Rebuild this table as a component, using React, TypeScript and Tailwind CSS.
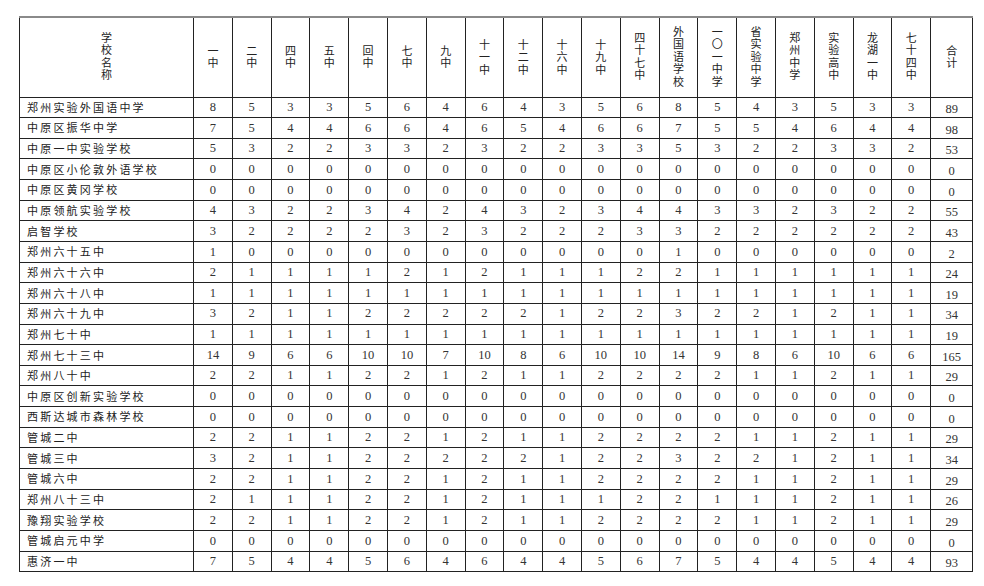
import React from "react";

const headers = [
  "一中", "二中", "四中", "五中", "回中", "七中", "九中", "十一中", "十二中", "十六中", "十九中",
  "四十七中", "外国语学校", "一〇一中学", "省实验中学", "郑州中学", "实验高中", "龙湖一中", "七十四中",
];

const rows: [string, number[], number][] = [
  ["郑州实验外国语中学", [8, 5, 3, 3, 5, 6, 4, 6, 4, 3, 5, 6, 8, 5, 4, 3, 5, 3, 3], 89],
  ["中原区振华中学", [7, 5, 4, 4, 6, 6, 4, 6, 5, 4, 6, 6, 7, 5, 5, 4, 6, 4, 4], 98],
  ["中原一中实验学校", [5, 3, 2, 2, 3, 3, 2, 3, 2, 2, 3, 3, 5, 3, 2, 2, 3, 3, 2], 53],
  ["中原区小伦敦外语学校", Array(19).fill(0), 0],
  ["中原区黄冈学校", Array(19).fill(0), 0],
  ["中原领航实验学校", [4, 3, 2, 2, 3, 4, 2, 4, 3, 2, 3, 4, 4, 3, 3, 2, 3, 2, 2], 55],
  ["启智学校", [3, 2, 2, 2, 2, 3, 2, 3, 2, 2, 2, 3, 3, 2, 2, 2, 2, 2, 2], 43],
  ["郑州六十五中", [1, 0, 0, 0, 0, 0, 0, 0, 0, 0, 0, 0, 1, 0, 0, 0, 0, 0, 0], 2],
  ["郑州六十六中", [2, 1, 1, 1, 1, 2, 1, 2, 1, 1, 1, 2, 2, 1, 1, 1, 1, 1, 1], 24],
  ["郑州六十八中", Array(19).fill(1), 19],
  ["郑州六十九中", [3, 2, 1, 1, 2, 2, 2, 2, 2, 1, 2, 2, 3, 2, 2, 1, 2, 1, 1], 34],
  ["郑州七十中", Array(19).fill(1), 19],
  ["郑州七十三中", [14, 9, 6, 6, 10, 10, 7, 10, 8, 6, 10, 10, 14, 9, 8, 6, 10, 6, 6], 165],
  ["郑州八十中", [2, 2, 1, 1, 2, 2, 1, 2, 1, 1, 2, 2, 2, 2, 1, 1, 2, 1, 1], 29],
  ["中原区创新实验学校", Array(19).fill(0), 0],
  ["西斯达城市森林学校", Array(19).fill(0), 0],
  ["管城二中", [2, 2, 1, 1, 2, 2, 1, 2, 1, 1, 2, 2, 2, 2, 1, 1, 2, 1, 1], 29],
  ["管城三中", [3, 2, 1, 1, 2, 2, 2, 2, 2, 1, 2, 2, 3, 2, 2, 1, 2, 1, 1], 34],
  ["管城六中", [2, 2, 1, 1, 2, 2, 1, 2, 1, 1, 2, 2, 2, 2, 1, 1, 2, 1, 1], 29],
  ["郑州八十三中", [2, 1, 1, 1, 2, 2, 1, 2, 1, 1, 1, 2, 2, 1, 1, 1, 2, 1, 1], 26],
  ["豫翔实验学校", [2, 2, 1, 1, 2, 2, 1, 2, 1, 1, 2, 2, 2, 2, 1, 1, 2, 1, 1], 29],
  ["管城启元中学", Array(19).fill(0), 0],
  ["惠济一中", [7, 5, 4, 4, 5, 6, 4, 6, 4, 4, 5, 6, 7, 5, 4, 4, 5, 4, 4], 93],
];

function VText({ text }: { text: string }) {
  return (
    <div className="flex justify-center">
      <span className="[writing-mode:vertical-rl] [text-orientation:upright] text-[11px] leading-[14px] tracking-[1.5px] text-[#222]">
        {text}
      </span>
    </div>
  );
}

export default function App() {
  return (
    <div className="w-[984px] h-[586px] bg-white pt-[16px] pl-[19px] font-['Noto_Sans_CJK_SC',sans-serif]">
      <table className="table-fixed border-collapse w-[953px] border-t-2 border-t-[#8a8a8a]">
        <colgroup>
          <col className="w-[174px]" />
          {headers.map((h) => (
            <col key={h} className="w-[38.8px]" />
          ))}
          <col className="w-[42px]" />
        </colgroup>
        <thead>
          <tr className="h-[80px]">
            <th className="border border-[#222] border-t-2 border-t-[#8a8a8a] font-normal align-middle">
              <VText text="学校名称" />
            </th>
            {headers.map((h) => (
              <th key={h} className="border border-[#222] border-t-2 border-t-[#8a8a8a] font-normal align-middle">
                <VText text={h} />
              </th>
            ))}
            <th className="border border-[#222] border-t-2 border-t-[#8a8a8a] font-normal align-middle">
              <VText text="合计" />
            </th>
          </tr>
        </thead>
        <tbody>
          {rows.map(([name, vals, total]) => (
            <tr key={name} className="h-[20.65px]">
              <td className="border border-[#222] pl-[7px] text-[11px] tracking-[2.2px] text-[#222] leading-none whitespace-nowrap">
                {name}
              </td>
              {vals.map((v, i) => (
                <td
                  key={i}
                  className="border border-[#222] text-center font-['Liberation_Serif',serif] text-[12.5px] leading-none text-[#333]"
                >
                  {v}
                </td>
              ))}
              <td className="border border-[#222] text-center font-['Liberation_Serif',serif] text-[12.5px] leading-none text-[#333] pt-[4px]">
                {total}
              </td>
            </tr>
          ))}
        </tbody>
      </table>
    </div>
  );
}
